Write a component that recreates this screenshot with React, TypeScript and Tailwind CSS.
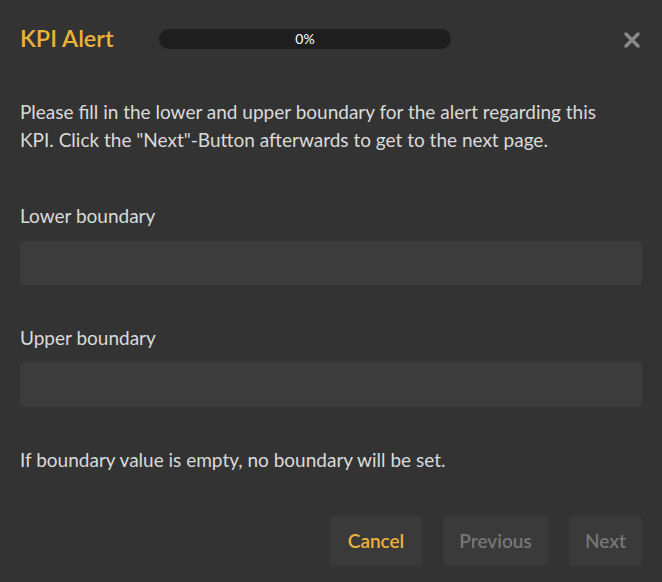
export default function App() {
  return (
    <div
      className="flex h-[582px] w-[662px] flex-col bg-[#333333] px-5 text-[#dadada]"
      style={{ fontFamily: 'Lato, "Noto Sans", sans-serif' }}
    >
      <div className="flex h-[77px] items-center">
        <h2 className="w-[139px] text-[23.5px] font-semibold text-[#ebb23a]">KPI Alert</h2>
        <div className="flex h-5 w-[292px] items-center justify-center rounded-full bg-[#1e1e1e] text-[14px] text-white">
          0%
        </div>
        <div className="flex-1" />
        <button className="mr-[2px] mt-[2px] text-[#8a8a8a]">
          <svg width="16" height="16" viewBox="0 0 16 16">
            <path d="M2 2L14 14M14 2L2 14" stroke="currentColor" strokeWidth="3.4" strokeLinecap="round" />
          </svg>
        </button>
      </div>

      <p className="mt-[21px] text-[19px] leading-[28px]">
        Please fill in the lower and upper boundary for the alert regarding this
        <br />
        KPI. Click the "Next"-Button afterwards to get to the next page.
      </p>

      <label className="mt-[48px] text-[19px] leading-[28px]">Lower boundary</label>
      <input className="mt-[11px] h-[44px] rounded bg-[#3c3c3c] outline-none" />

      <label className="mt-[39px] text-[19px] leading-[28px]">Upper boundary</label>
      <input className="mt-[10px] h-[45px] rounded bg-[#3c3c3c] outline-none" />

      <p className="mt-[39px] text-[19px] leading-[28px]">
        If boundary value is empty, no boundary will be set.
      </p>

      <div className="mt-[42px] flex justify-end gap-[21px]">
        <button className="h-[50px] w-[92px] rounded bg-[#3a3a3a] text-[19px] font-semibold text-[#ebb23a]">
          Cancel
        </button>
        <button className="h-[50px] w-[105px] rounded bg-[#3a3a3a] text-[19px] font-semibold text-[#777777]">
          Previous
        </button>
        <button className="h-[50px] w-[73px] rounded bg-[#3a3a3a] text-[19px] font-semibold text-[#777777]">
          Next
        </button>
      </div>
    </div>
  )
}
